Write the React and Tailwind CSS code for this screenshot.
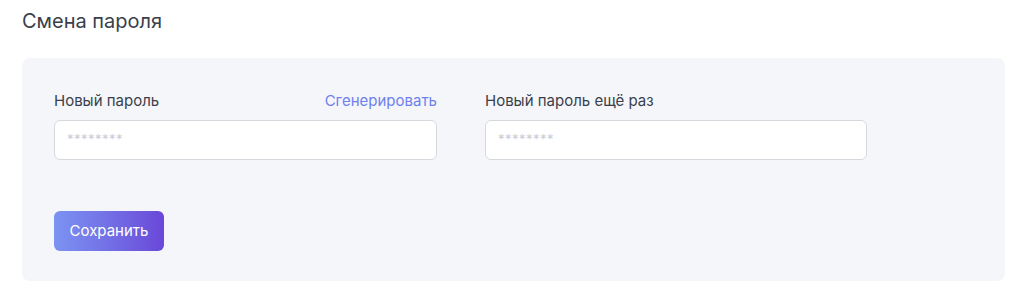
export default function App() {
  return (
    <div className="w-[1024px] h-[305px] bg-white px-[22px] pt-[7px]" style={{ fontFamily: "Inter, 'Noto Sans', sans-serif" }}>
      <h1 className="text-[20px] leading-[28px] text-[#3a3f4b] font-normal">Смена пароля</h1>
      <div className="mt-[23px] w-[983px] h-[223px] rounded-[8px] bg-[#f5f6fa] px-[32px] pt-[32px]">
        <div className="flex gap-[48px]">
          <div className="w-[383px]">
            <div className="flex justify-between items-center h-[22px] text-[15px]">
              <span className="text-[#3a3f4b]">Новый пароль</span>
              <span className="text-[#6f7ff0]">Сгенерировать</span>
            </div>
            <div className="mt-[8px] h-[40px] rounded-[6px] border border-[#d6d8de] bg-white flex items-center px-[12px] text-[13px] text-[#c9ccd4] tracking-[0.5px]">
              ********
            </div>
          </div>
          <div className="w-[382px]">
            <div className="flex items-center h-[22px] text-[15px]">
              <span className="text-[#3a3f4b]">Новый пароль ещё раз</span>
            </div>
            <div className="mt-[8px] h-[40px] rounded-[6px] border border-[#d6d8de] bg-white flex items-center px-[12px] text-[13px] text-[#c9ccd4] tracking-[0.5px]">
              ********
            </div>
          </div>
        </div>
        <button className="mt-[51px] w-[110px] h-[40px] rounded-[6px] bg-gradient-to-r from-[#7b93f2] to-[#6a47d8] text-white text-[15px] flex items-center justify-center">
          Сохранить
        </button>
      </div>
    </div>
  );
}
